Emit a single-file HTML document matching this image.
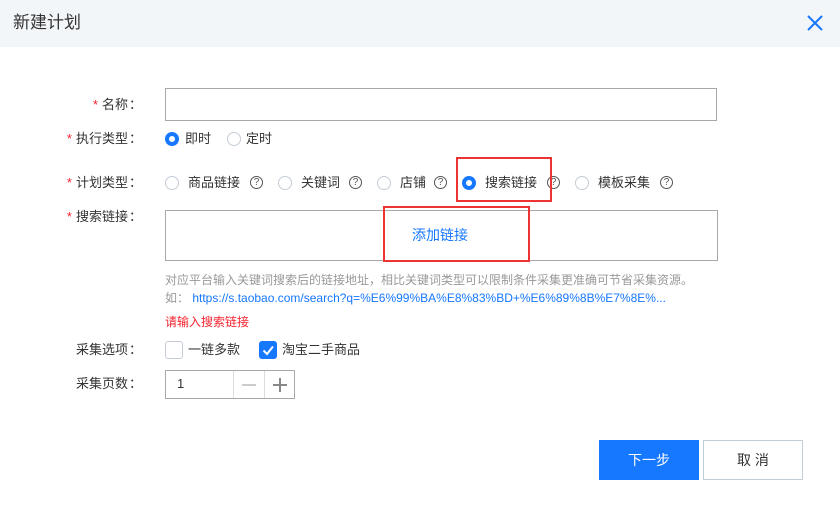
<!DOCTYPE html>
<html><head><meta charset="utf-8"><style>
*{margin:0;padding:0;box-sizing:border-box}
body{width:840px;height:514px;background:#fff;font-family:"Liberation Sans","Noto Sans CJK SC",sans-serif;font-size:13px;line-height:16px;color:#333;position:relative;overflow:hidden}
.a{position:absolute;white-space:nowrap}
.hd{left:0;top:0;width:840px;height:47px;background:#f3f6f9}
.lbl{right:698px;text-align:right;font-size:13px;color:#333}
.lbl i{color:#f5222d;font-style:normal;margin-right:4px}
.lbl b{display:inline-block;width:14px;font-weight:normal;text-align:right}
.rad{width:14px;height:14px;border:1px solid #c5ccd6;border-radius:50%;background:#fff}
.rad.on{border:4px solid #1677ff}
.q{width:13px;height:13px;border:1px solid #555;border-radius:50%;font-size:10px;line-height:11px;text-align:center;color:#555}
.box{border:1px solid #a8a8a8;background:#fff}
.red{border:2px solid #ee3333}
</style></head><body>
<div class="a hd"></div>
<div class="a" style="left:13px;top:13px;font-size:17px;line-height:20px;color:#333">新建计划</div>
<svg class="a" style="left:806px;top:14px" width="18" height="18" viewBox="0 0 18 18"><path d="M2 2L16 16M16 2L2 16" stroke="#1677ff" stroke-width="2"/></svg>

<div class="a lbl" style="top:97px"><i>*</i>名称<b>：</b></div>
<div class="a box" style="left:165px;top:88px;width:552px;height:33px"></div>

<div class="a lbl" style="top:131px"><i>*</i>执行类型<b>：</b></div>
<div class="a rad on" style="left:165px;top:132px"></div><div class="a" style="left:185px;top:131px">即时</div>
<div class="a rad" style="left:227px;top:132px"></div><div class="a" style="left:246px;top:131px">定时</div>

<div class="a lbl" style="top:175px"><i>*</i>计划类型<b>：</b></div>
<div class="a rad" style="left:165px;top:176px"></div><div class="a" style="left:188px;top:175px">商品链接</div><div class="a q" style="left:250px;top:176px">?</div>
<div class="a rad" style="left:278px;top:176px"></div><div class="a" style="left:301px;top:175px">关键词</div><div class="a q" style="left:349px;top:176px">?</div>
<div class="a rad" style="left:377px;top:176px"></div><div class="a" style="left:400px;top:175px">店铺</div><div class="a q" style="left:434px;top:176px">?</div>
<div class="a rad on" style="left:462px;top:176px"></div><div class="a" style="left:485px;top:175px">搜索链接</div><div class="a q" style="left:547px;top:176px">?</div>
<div class="a rad" style="left:575px;top:176px"></div><div class="a" style="left:598px;top:175px">模板采集</div><div class="a q" style="left:660px;top:176px">?</div>
<div class="a red" style="left:456px;top:157px;width:96px;height:45px"></div>

<div class="a lbl" style="top:209px"><i>*</i>搜索链接<b>：</b></div>
<div class="a box" style="left:165px;top:210px;width:553px;height:51px"></div>
<div class="a" style="left:412px;top:227px;color:#1677ff;font-size:14px">添加链接</div>
<div class="a red" style="left:383px;top:206px;width:147px;height:56px"></div>

<div class="a" style="left:165px;top:272px;font-size:12px;color:#999">对应平台输入关键词搜索后的链接地址，相比关键词类型可以限制条件采集更准确可节省采集资源。</div>
<div class="a" style="left:165px;top:290px;font-size:12px;color:#999">如： <span style="color:#1677ff">https://s.taobao.com/search?q=%E6%99%BA%E8%83%BD+%E6%89%8B%E7%8E%...</span></div>
<div class="a" style="left:165px;top:314px;font-size:12px;color:#f5222d">请输入搜索链接</div>

<div class="a lbl" style="top:342px">采集选项<b>：</b></div>
<div class="a" style="left:165px;top:341px;width:18px;height:18px;border:1px solid #c5ccd6;border-radius:3px"></div>
<div class="a" style="left:188px;top:342px">一链多款</div>
<div class="a" style="left:259px;top:341px;width:18px;height:18px;background:#1677ff;border-radius:3px"></div>
<svg class="a" style="left:259px;top:341px" width="18" height="18"><path d="M4.5 9.5L8 13L14 5.5" stroke="#fff" stroke-width="2" fill="none"/></svg>
<div class="a" style="left:282px;top:342px">淘宝二手商品</div>

<div class="a lbl" style="top:376px">采集页数<b>：</b></div>
<div class="a box" style="left:165px;top:370px;width:130px;height:29px"></div>
<div class="a" style="left:233px;top:371px;width:1px;height:27px;background:#ddd"></div>
<div class="a" style="left:264px;top:371px;width:1px;height:27px;background:#ddd"></div>
<div class="a" style="left:177px;top:376px;color:#333">1</div>
<div class="a" style="left:242px;top:384px;width:14px;height:1.5px;background:#ccc"></div>
<div class="a" style="left:273px;top:384px;width:14px;height:1.5px;background:#888"></div>
<div class="a" style="left:279px;top:378px;width:1.5px;height:14px;background:#888"></div>

<div class="a" style="left:599px;top:440px;width:100px;height:40px;background:#1677ff;color:#fff;font-size:14px;text-align:center;line-height:40px">下一步</div>
<div class="a" style="left:703px;top:440px;width:100px;height:40px;border:1px solid #c0ccd8;color:#333;font-size:14px;text-align:center;line-height:38px">取 消</div>
</body></html>
